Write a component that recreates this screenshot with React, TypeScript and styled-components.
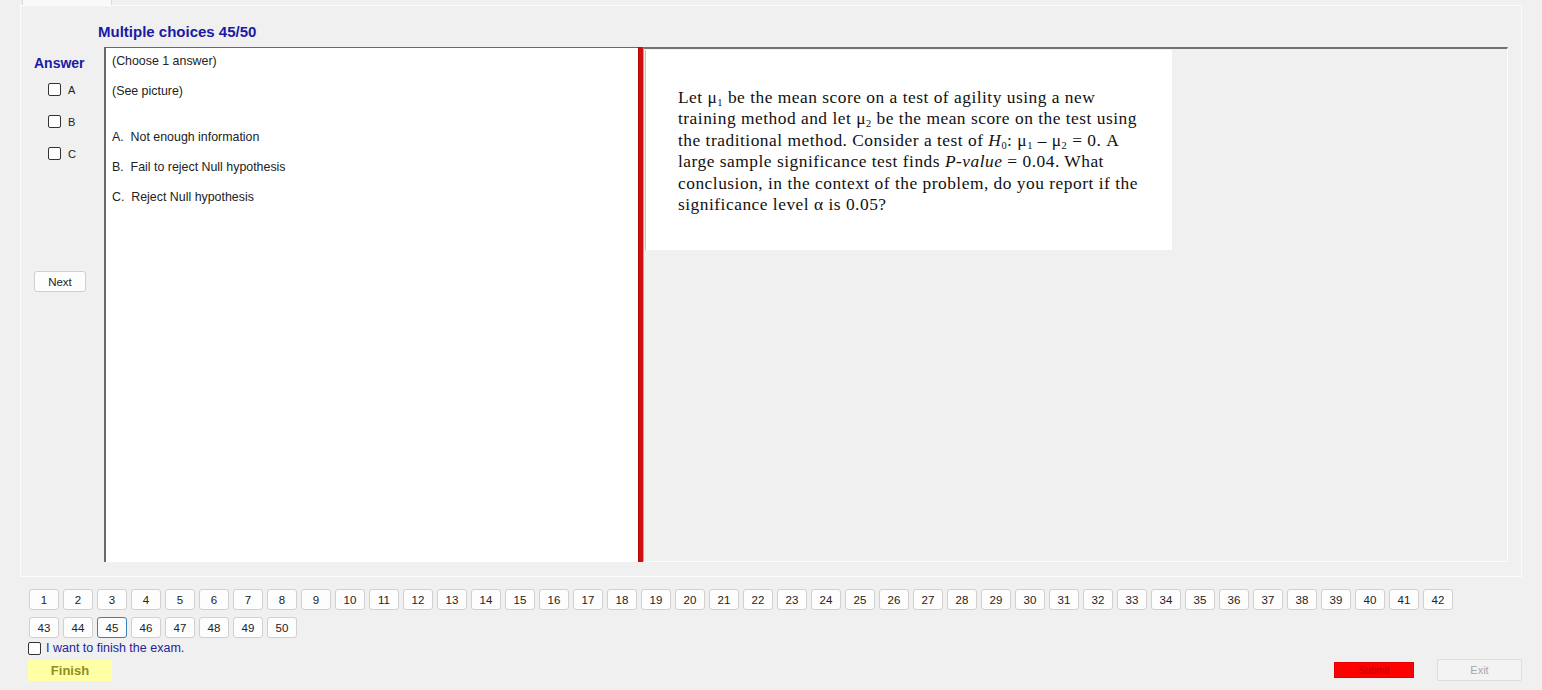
import styled, { createGlobalStyle } from "styled-components";

const GlobalStyle = createGlobalStyle`
  html, body {
    margin: 0;
    padding: 0;
    background: #f0f0f0;
  }
  body {
    font-family: "Liberation Sans", Arial, sans-serif;
    color: #1e1e1e;
  }
`;

const Page = styled.div`
  width: 1542px;
  height: 690px;
  display: flex;
  flex-direction: column;
  background: #f0f0f0;
  overflow: hidden;
`;

const TabStrip = styled.div`
  height: 5px;
  display: flex;
  padding-left: 22px;
`;

const Tab = styled.div`
  width: 88px;
  height: 5px;
  background: #f9f9f9;
  border-left: 1px solid #dadada;
  border-right: 1px solid #dadada;
`;

const TabPage = styled.div`
  margin-left: 20px;
  width: 1502px;
  height: 572px;
  box-sizing: border-box;
  border: 1px solid #fbfbfb;
  padding: 18px 13px 14px 0;
  display: flex;
  flex-direction: column;
  gap: 7px;
`;

const Title = styled.div`
  padding-left: 77px;
  font-size: 15px;
  line-height: 16px;
  font-weight: bold;
  color: #1a1aa4;
`;

const ContentRow = styled.div`
  display: flex;
  height: 515px;
`;

const AnswerColumn = styled.div`
  width: 83px;
  display: flex;
  flex-direction: column;
`;

const AnswerLabel = styled.div`
  margin: 8px 0 0 13px;
  font-size: 14px;
  font-weight: bold;
  color: #1a1aa4;
`;

const ChoiceList = styled.div`
  margin: 12px 0 0 27px;
  display: flex;
  flex-direction: column;
  gap: 19px;
`;

const Choice = styled.label`
  display: flex;
  align-items: center;
  gap: 7px;
  font-size: 11px;
  color: #222;
  height: 13px;
`;

const Box = styled.span`
  width: 11px;
  height: 11px;
  border: 1px solid #333;
  border-radius: 2px;
  background: #fff;
  flex: none;
`;

const PlainButton = styled.button<{ $w: number; $h: number; $focus?: boolean }>`
  width: ${({ $w }) => $w}px;
  height: ${({ $h }) => $h}px;
  box-sizing: border-box;
  padding: 0;
  background: #fdfdfd;
  border: 1px solid ${({ $focus }) => ($focus ? "#3a80b8" : "#d0d0d0")};
  border-radius: 3px;
  font-family: "Liberation Sans", Arial, sans-serif;
  font-size: 11.5px;
  color: #222;
  cursor: pointer;
`;

const NextWrap = styled.div`
  margin: 111px 0 0 13px;
`;

const AnswerBox = styled.div`
  width: 534px;
  height: 515px;
  box-sizing: border-box;
  background: #fff;
  border-top: 1px solid #6a6a6a;
  border-left: 2px solid #6a6a6a;
  padding: 6px 0 0 6px;
  font-size: 12.4px;
  color: #222;
`;

const AnswerLine = styled.div<{ $gap: number }>`
  margin-top: ${({ $gap }) => $gap}px;
  line-height: 15px;
`;

const RedBar = styled.div`
  width: 5px;
  height: 515px;
  background: #d20f0f;
  border-left: 1px solid #b30000;
  box-sizing: border-box;
`;

const PicturePanel = styled.div`
  flex: 1;
  height: 515px;
  box-sizing: border-box;
  border-top: 2px solid #727272;
  border-left: 1px solid #a8a8a8;
  border-right: 1px solid #fdfdfd;
  border-bottom: 1px solid #fdfdfd;
  padding: 1px 0 0 1px;
`;

const Picture = styled.div`
  width: 527px;
  height: 200px;
  box-sizing: border-box;
  background: #fff;
  border-left: 1px solid #c4c4c4;
  padding: 37px 0 0 32px;
  font-family: "Liberation Serif", "Times New Roman", serif;
  font-size: 17.4px;
  line-height: 21.4px;
  color: #111;
  letter-spacing: 0.5px;
  white-space: nowrap;
`;

const Footer = styled.div`
  padding: 12px 0 0 28px;
  display: flex;
  flex-direction: column;
`;

const NumRow = styled.div`
  display: flex;
  gap: 4px;
  padding-left: 1px;
  margin-bottom: 7px;
`;

const FinishCheck = styled.label`
  display: flex;
  align-items: center;
  gap: 5px;
  margin-top: -5px;
  font-size: 12.5px;
  color: #24249a;
  height: 16px;
`;

const ActionRow = styled.div`
  display: flex;
  align-items: center;
  margin-top: 3px;
  padding-right: 20px;
`;

const FinishButton = styled.button`
  width: 84px;
  height: 21px;
  background: #ffffa6;
  border: none;
  font-family: "Liberation Sans", Arial, sans-serif;
  font-size: 13px;
  font-weight: bold;
  color: #8e8e1c;
  padding: 0;
`;

const Spacer = styled.div`
  flex: 1;
`;

const SubmitButton = styled.button`
  width: 80px;
  height: 16px;
  background: #fd0000;
  border: 1px solid #e80000;
  font-family: "Liberation Sans", Arial, sans-serif;
  font-size: 10px;
  color: #c40000;
  padding: 0;
  margin-right: 23px;
`;

const ExitButton = styled.button`
  width: 85px;
  height: 22px;
  background: #f3f3f3;
  border: 1px solid #dcdcdc;
  border-radius: 2px;
  font-family: "Liberation Sans", Arial, sans-serif;
  font-size: 11px;
  color: #a8a8a8;
  padding: 0;
`;

const Sub = styled.sub`
  font-size: 0.6em;
  vertical-align: -0.25em;
  line-height: 0;
`;

const row1 = Array.from({ length: 42 }, (_, i) => i + 1);
const row2 = Array.from({ length: 8 }, (_, i) => i + 43);

export default function App() {
  return (
    <Page>
      <GlobalStyle />
      <TabStrip>
        <Tab />
      </TabStrip>
      <TabPage>
        <Title>Multiple choices 45/50</Title>
        <ContentRow>
          <AnswerColumn>
            <AnswerLabel>Answer</AnswerLabel>
            <ChoiceList>
              <Choice>
                <Box />A
              </Choice>
              <Choice>
                <Box />B
              </Choice>
              <Choice>
                <Box />C
              </Choice>
            </ChoiceList>
            <NextWrap>
              <PlainButton $w={52} $h={21}>
                Next
              </PlainButton>
            </NextWrap>
          </AnswerColumn>
          <AnswerBox>
            <AnswerLine $gap={0}>(Choose 1 answer)</AnswerLine>
            <AnswerLine $gap={15}>(See picture)</AnswerLine>
            <AnswerLine $gap={31}>A.&nbsp; Not enough information</AnswerLine>
            <AnswerLine $gap={15}>B.&nbsp; Fail to reject Null hypothesis</AnswerLine>
            <AnswerLine $gap={15}>C.&nbsp; Reject Null hypothesis</AnswerLine>
          </AnswerBox>
          <RedBar />
          <PicturePanel>
            <Picture>
              Let μ<Sub>1</Sub> be the mean score on a test of agility using a new
              <br />
              training method and let μ<Sub>2</Sub> be the mean score on the test using
              <br />
              the traditional method. Consider a test of <i>H</i>
              <Sub>0</Sub>: μ<Sub>1</Sub> – μ<Sub>2</Sub> = 0. A
              <br />
              large sample significance test finds <i>P-value</i> = 0.04. What
              <br />
              conclusion, in the context of the problem, do you report if the
              <br />
              significance level α is 0.05?
            </Picture>
          </PicturePanel>
        </ContentRow>
      </TabPage>
      <Footer>
        <NumRow>
          {row1.map((n) => (
            <PlainButton key={n} $w={30} $h={21}>
              {n}
            </PlainButton>
          ))}
        </NumRow>
        <NumRow>
          {row2.map((n) => (
            <PlainButton key={n} $w={30} $h={21} $focus={n === 45}>
              {n}
            </PlainButton>
          ))}
        </NumRow>
        <FinishCheck>
          <Box />I want to finish the exam.
        </FinishCheck>
        <ActionRow>
          <FinishButton>Finish</FinishButton>
          <Spacer />
          <SubmitButton>Submit</SubmitButton>
          <ExitButton>Exit</ExitButton>
        </ActionRow>
      </Footer>
    </Page>
  );
}
